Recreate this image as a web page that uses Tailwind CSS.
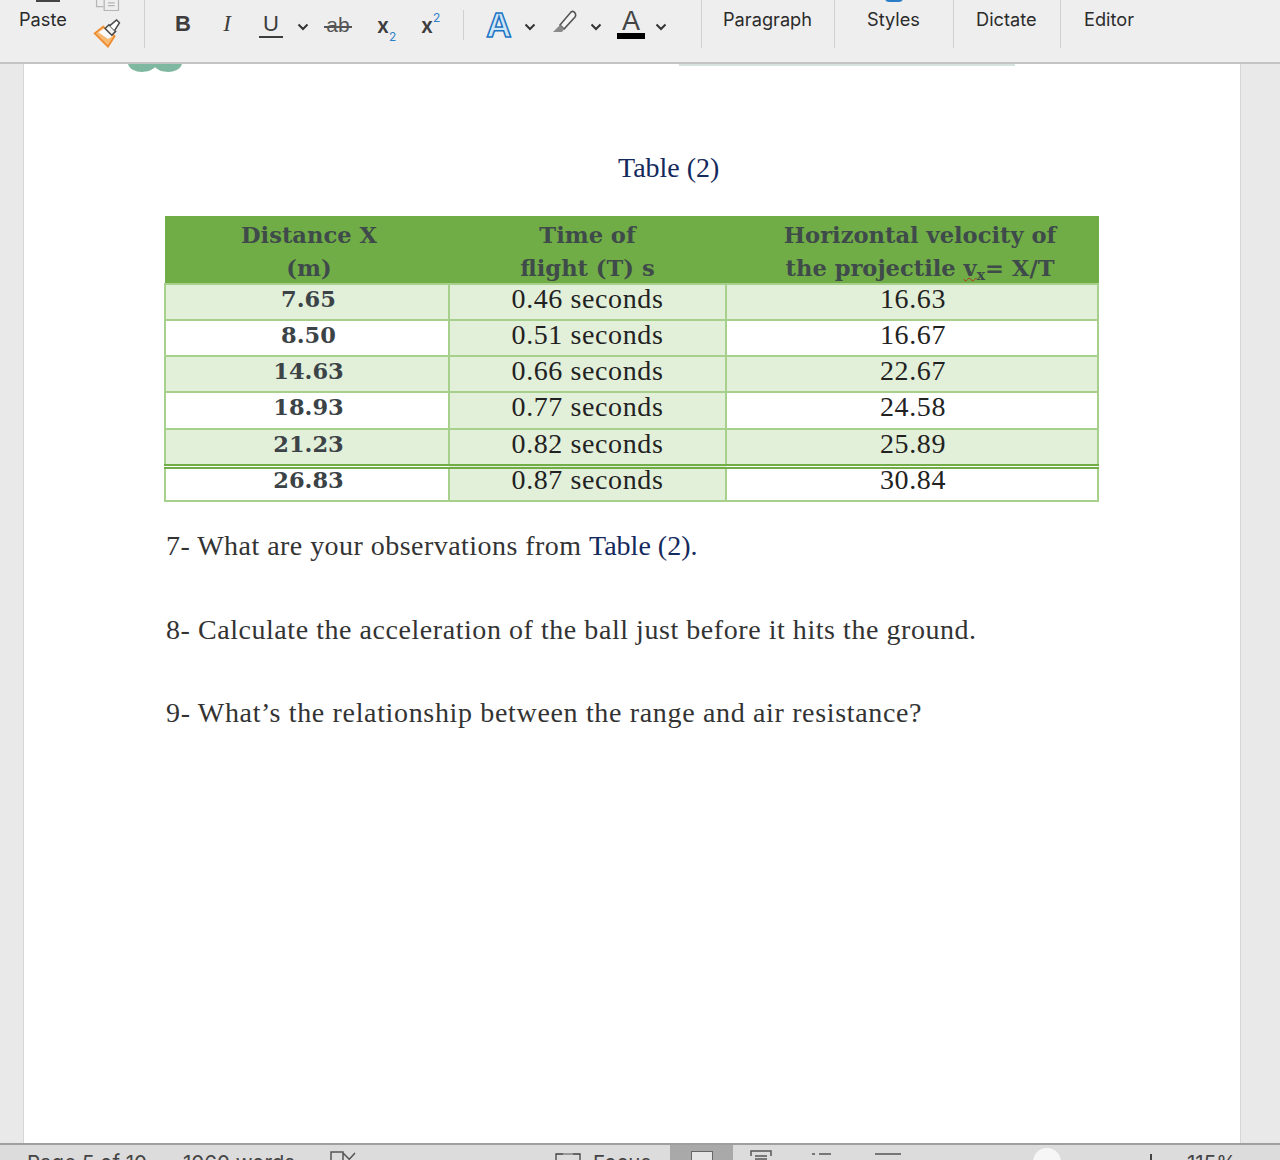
<!DOCTYPE html>
<html lang="en">
<head>
  <meta charset="UTF-8">
  <title>Word document</title>
  <script src="https://cdn.jsdelivr.net/npm/@tailwindcss/browser@4"></script>
</head>
<body class="h-[1160px] w-[1280px] overflow-hidden flex flex-col bg-[#e9e9e9] font-['Inter','Liberation_Sans',sans-serif]">

  <!-- Ribbon -->
  <header class="h-[64px] shrink-0 flex bg-[#eeeeee] border-b-2 border-[#c4c4c4] text-[#2b2b2b] text-[18.2px] overflow-hidden">
    <!-- Paste + clipboard -->
    <div class="w-[145px] h-[48px] shrink-0 flex border-r border-[#d0d0d0]">
      <div class="w-[90px] pl-[19px] flex flex-col">
        <div class="w-[24px] h-[2px] ml-[17px] bg-[#444]"></div>
        <span class="mt-[6px] leading-[22px]">Paste</span>
      </div>
      <div class="flex flex-col">
        <svg class="w-[30px] h-[14px] ml-[3px]" viewBox="0 0 30 14" fill="none" stroke="#b5b5b5" stroke-width="1.3"><path d="M3 0v7h7M11 0v11h15V0M15 3h7M15 6h7"/></svg>
        <svg class="w-[35px] h-[30px] mt-[6px]" viewBox="0 0 35 30" fill="none"><path d="M4 15L13 8l12 10-7 11z" fill="#f7b872" stroke="#ee8a2c" stroke-width="1.8"/><path d="M8 14l6-4 9 8-5 3z" fill="#fafafa"/><path d="M15 10l4-4 7 7-4 4z" fill="#f4f4f4" stroke="#4a4a4a" stroke-width="1.6"/><path d="M20 7l7-6 3 3-5 8" fill="#fff" stroke="#4a4a4a" stroke-width="1.6"/></svg>
      </div>
    </div>

    <!-- Font group -->
    <div class="w-[557px] h-[48px] shrink-0 flex items-start border-r border-[#d0d0d0] text-[#3d3d3d]">
      <span class="w-[32px] ml-[22px] mt-[11px] text-center font-bold font-['Liberation_Sans'] text-[22px] leading-[26px]">B</span>
      <span class="w-[32px] ml-[12px] mt-[11px] text-center italic font-['Liberation_Serif'] text-[23px] leading-[26px]">I</span>
      <span class="w-[24px] ml-[16px] mt-[12px] h-[26px] text-center border-b-2 border-[#3d3d3d] font-['Liberation_Sans'] text-[22px] leading-[23px]">U</span>
      <svg class="w-[12px] h-[8px] ml-[14px] mt-[23px]" viewBox="0 0 12 8" fill="none" stroke="#333" stroke-width="2"><path d="M1.5 1.5L6 6l4.5-4.5"/></svg>
      <span class="relative w-[28px] ml-[15px] mt-[13px] text-center font-['Liberation_Sans'] text-[#555] text-[21px] leading-[24px]">ab<span class="absolute left-0 right-0 top-[13px] h-[1.5px] bg-[#555]"></span></span>
      <span class="w-[22px] ml-[25px] mt-[14px] font-semibold text-[21px] leading-[24px]">x<sub class="text-[12px] font-normal text-[#2f80c8] bottom-[-8px]">2</sub></span>
      <span class="w-[22px] ml-[22px] mt-[14px] font-semibold text-[21px] leading-[24px]">x<sup class="text-[12px] font-normal text-[#2f80c8] top-[-11px]">2</sup></span>
      <div class="w-px h-[30px] ml-[20px] mt-[10px] bg-[#d0d0d0]"></div>
      <span class="w-[28px] ml-[21px] mt-[8px] text-center font-bold font-['Liberation_Sans'] text-[35px] leading-[34px] text-[#cfe6f6] [-webkit-text-stroke:1.5px_#1a74c4]">A</span>
      <svg class="w-[12px] h-[8px] ml-[11px] mt-[23px]" viewBox="0 0 12 8" fill="none" stroke="#333" stroke-width="2"><path d="M1.5 1.5L6 6l4.5-4.5"/></svg>
      <svg class="w-[24px] h-[24px] ml-[17px] mt-[10px]" viewBox="0 0 24 24" fill="none"><path d="M7 15L18 2c1.500-1 3-.5 4 1s1 2.500 0 4L11 19z" fill="#f4f4f4" stroke="#555" stroke-width="1.6"/><path d="M0 22l7-7 4 4-2 3z" fill="#8a8a8a"/></svg>
      <svg class="w-[12px] h-[8px] ml-[13px] mt-[23px]" viewBox="0 0 12 8" fill="none" stroke="#333" stroke-width="2"><path d="M1.5 1.5L6 6l4.5-4.5"/></svg>
      <div class="w-[28px] ml-[15px] mt-[9px] flex flex-col items-center">
        <span class="font-['Liberation_Sans'] text-[27px] leading-[24px] text-[#444]">A</span>
        <div class="w-full h-[6px] bg-black"></div>
      </div>
      <svg class="w-[12px] h-[8px] ml-[10px] mt-[23px]" viewBox="0 0 12 8" fill="none" stroke="#333" stroke-width="2"><path d="M1.5 1.5L6 6l4.5-4.5"/></svg>
    </div>

    <!-- Named groups -->
    <div class="w-[133px] h-[48px] shrink-0 pl-[21px] pt-[8px] leading-[22px] border-r border-[#d0d0d0]">Paragraph</div>
    <div class="relative w-[119px] h-[48px] shrink-0 pl-[32px] pt-[8px] leading-[22px] border-r border-[#d0d0d0]">
      Styles
      <div class="absolute left-[50px] top-[-6px] w-[18px] h-[8px] rounded-full bg-[#2a7cc7]"></div>
    </div>
    <div class="w-[107px] h-[48px] shrink-0 pl-[22px] pt-[8px] leading-[22px] border-r border-[#d0d0d0]">Dictate</div>
    <div class="h-[48px] pl-[23px] pt-[8px] leading-[22px]">Editor</div>
  </header>

  <!-- Document area -->
  <main class="h-[1079px] shrink-0 overflow-hidden">
    <div class="ml-[23px] w-[1218px] h-full bg-white border-x border-[#d6d6d6] overflow-hidden font-['Liberation_Serif',serif]">

      <!-- bottom edge of the page header -->
      <div class="h-[8px] overflow-hidden flex">
        <svg class="w-[56px] h-[8px] ml-[103px]" viewBox="0 0 56 8"><path d="M1 0c3 10 21 10 27 3c6 7 24 7 27-3z" fill="#7fb8a0"/></svg>
        <div class="ml-[496px] w-[336px] h-[2px] bg-[#d5e4df]"></div>
      </div>

      <p class="mt-[81px] ml-[594px] text-[28px] leading-[30px] text-[#14295c]">Table (2)</p>

      <!-- Data table -->
      <table class="mt-[33px] ml-[140px] w-[933px] table-fixed border-collapse text-[#222] text-[28px] tracking-[0.6px]">
        <colgroup>
          <col class="w-[284px]"><col class="w-[277px]"><col class="w-[372px]">
        </colgroup>
        <thead class="bg-[#70ad47] text-[#3f4a4a] font-['DejaVu_Serif',serif] font-bold text-[22.6px] tracking-normal">
          <tr class="align-top">
            <th class="pt-[2px] pl-[4px] font-bold border border-[#70ad47]"><div class="h-[64px] leading-[33px]">Distance X<br>(m)</div></th>
            <th class="pt-[2px] font-bold border border-[#70ad47]"><div class="h-[64px] leading-[33px]">Time of<br>flight (T) s</div></th>
            <th class="pt-[2px] pl-[16px] font-bold border border-[#70ad47]"><div class="h-[64px] leading-[33px]">Horizontal velocity of<br>the projectile <span class="underline decoration-wavy decoration-[#b03020] decoration-1">v<sub class="text-[14px]">x</sub></span>= X/T</div></th>
          </tr>
        </thead>
        <tbody class="text-center leading-[28px]">
          <tr class="h-[36px] bg-[#e2efd9] align-top">
            <td class="pl-[3px] border-2 border-[#a8d08d] font-['DejaVu_Serif'] font-bold text-[#3b4347] text-[22.5px] tracking-normal">7.65</td>
            <td class="border-2 border-[#a8d08d]">0.46 seconds</td>
            <td class="pl-[2px] border-2 border-[#a8d08d]">16.63</td>
          </tr>
          <tr class="h-[36px] align-top">
            <td class="pl-[3px] border-2 border-[#a8d08d] font-['DejaVu_Serif'] font-bold text-[#3b4347] text-[22.5px] tracking-normal">8.50</td>
            <td class="border-2 border-[#a8d08d] bg-[#e2efd9]">0.51 seconds</td>
            <td class="pl-[2px] border-2 border-[#a8d08d]">16.67</td>
          </tr>
          <tr class="h-[36px] bg-[#e2efd9] align-top">
            <td class="pl-[3px] border-2 border-[#a8d08d] font-['DejaVu_Serif'] font-bold text-[#3b4347] text-[22.5px] tracking-normal">14.63</td>
            <td class="border-2 border-[#a8d08d]">0.66 seconds</td>
            <td class="pl-[2px] border-2 border-[#a8d08d]">22.67</td>
          </tr>
          <tr class="h-[37px] align-top">
            <td class="pl-[3px] border-2 border-[#a8d08d] font-['DejaVu_Serif'] font-bold text-[#3b4347] text-[22.5px] tracking-normal">18.93</td>
            <td class="border-2 border-[#a8d08d] bg-[#e2efd9]">0.77 seconds</td>
            <td class="pl-[2px] border-2 border-[#a8d08d]">24.58</td>
          </tr>
          <tr class="h-[37px] bg-[#e2efd9] align-top">
            <td class="pl-[3px] border-2 border-b-[5px] border-double border-x-[#a8d08d] border-t-[#a8d08d] border-b-[#70ad47] font-['DejaVu_Serif'] font-bold text-[#3b4347] text-[22.5px] tracking-normal">21.23</td>
            <td class="border-2 border-b-[5px] border-double border-x-[#a8d08d] border-t-[#a8d08d] border-b-[#70ad47]">0.82 seconds</td>
            <td class="pl-[2px] border-2 border-b-[5px] border-double border-x-[#a8d08d] border-t-[#a8d08d] border-b-[#70ad47]">25.89</td>
          </tr>
          <tr class="h-[35px] align-top leading-[22px]">
            <td class="pl-[3px] border-2 border-[#a8d08d] border-t-0 font-['DejaVu_Serif'] font-bold text-[#3b4347] text-[22.5px] tracking-normal">26.83</td>
            <td class="border-2 border-[#a8d08d] border-t-0 bg-[#e2efd9]">0.87 seconds</td>
            <td class="pl-[2px] border-2 border-[#a8d08d] border-t-0">30.84</td>
          </tr>
        </tbody>
      </table>

      <!-- Questions -->
      <div class="ml-[142px] mt-[28px] text-[#333] text-[28px] leading-[32px] flex flex-col gap-[51.5px]">
        <p class="tracking-[0.46px]">7- What are your observations from <span class="text-[#14295c] tracking-normal">Table (2).</span></p>
        <p class="tracking-[0.55px]">8- Calculate the acceleration of the ball just before it hits the ground.</p>
        <p class="tracking-[0.66px]">9- What’s the relationship between the range and air resistance?</p>
      </div>
    </div>
  </main>

  <!-- Status bar -->
  <footer class="h-[17px] shrink-0 flex overflow-hidden bg-[#dcdcdc] border-t-2 border-[#9f9f9f] text-[#444] text-[20.5px] leading-[24px]">
    <span class="ml-[27px] mt-[6px] w-[156px]">Page 5 of 10</span>
    <span class="mt-[6px] w-[147px]">1060 words</span>
    <svg class="w-[28px] h-[15px] mt-[6px]" viewBox="0 0 28 15" fill="none" stroke="#555" stroke-width="1.5"><path d="M1 9V1h12v8M13 2l12 12M25 2L14 14"/></svg>
    <svg class="w-[26px] h-[15px] ml-[197px] mt-[8px]" viewBox="0 0 26 15" fill="none" stroke="#555" stroke-width="1.5"><path d="M1 8V1h7M18 1h7v7"/><path d="M1 1h24" stroke-width="1"/></svg>
    <span class="ml-[12px] mt-[6px] w-[77px]">Focus</span>
    <div class="w-[63px] h-[15px] bg-[#a9a9a9] flex justify-center pt-[6px]"><div class="w-[22px] h-[12px] bg-white/70 border border-[#666]"></div></div>
    <svg class="w-[22px] h-[15px] ml-[17px] mt-[5px]" viewBox="0 0 22 15" fill="none" stroke="#555" stroke-width="1.5"><path d="M1 6V1h20v5M5 6h12M5 9h12"/></svg>
    <svg class="w-[22px] h-[15px] ml-[39px] mt-[8px]" viewBox="0 0 22 15" fill="none" stroke="#555" stroke-width="1.5"><path d="M1 1h3M8 1h12"/></svg>
    <svg class="w-[26px] h-[15px] ml-[42px] mt-[8px]" viewBox="0 0 26 15" fill="none" stroke="#555" stroke-width="1.5"><path d="M0 1h26"/></svg>
    <div class="relative w-[250px]">
      <div class="absolute left-[132px] top-[3px] w-[28px] h-[28px] rounded-full bg-[#f6f6f6]"></div>
      <div class="absolute left-[249px] top-[9px] w-[2px] h-[8px] bg-[#444]"></div>
    </div>
    <span class="ml-[36px] mt-[6px]">115%</span>
  </footer>

</body>
</html>
